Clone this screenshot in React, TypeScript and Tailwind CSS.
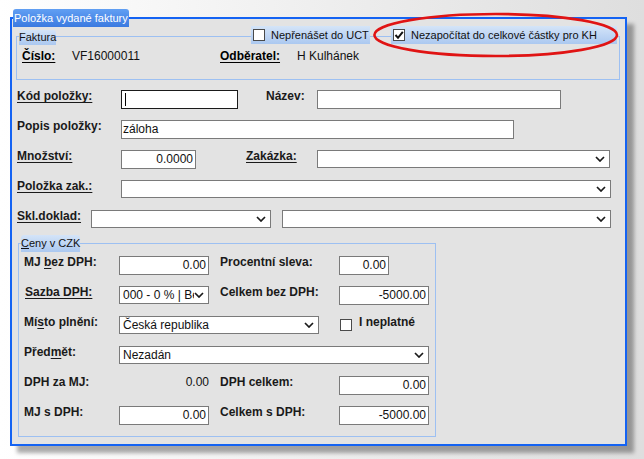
import React from 'react';

// popisky formuláře: tučné, posazené tak, aby účaří sedělo s textem v polích
const lbl = 'font-bold leading-[12px] text-[#1a1a1a] shrink-0 whitespace-nowrap';
const und = 'underline underline-offset-[2px]';

function Chevron() {
  return (
    <svg width="10" height="6" viewBox="0 0 10 6" className="shrink-0">
      <path d="M1 1L5 5L9 1" fill="none" stroke="#1a1a1a" strokeWidth="1.7" />
    </svg>
  );
}

function Select({ w, value = '' }: { w: string; value?: string }) {
  return (
    <div className={`${w} h-[18px] shrink-0 flex items-center border border-[#7a7a7a] bg-white pl-[3px] pr-[4px]`}>
      <span className="flex-1 overflow-hidden whitespace-nowrap leading-[16px] text-[#111]">{value}</span>
      <Chevron />
    </div>
  );
}

function TextBox({ w, value = '', right = false }: { w: string; value?: string; right?: boolean }) {
  return (
    <div
      className={`${w} h-[19px] shrink-0 border border-[#7a7a7a] bg-white leading-[17px] whitespace-nowrap overflow-hidden text-[#111] ${
        right ? 'text-right pr-[2px]' : 'pl-px'
      }`}
    >
      {value}
    </div>
  );
}

function Check({ checked = false }: { checked?: boolean }) {
  return (
    <div className="w-[12px] h-[12px] shrink-0 border border-[#4a4a4a] bg-white flex items-center justify-center">
      {checked && (
        <svg width="10" height="10" viewBox="0 0 10 10">
          <path d="M1.5 5L4 7.8L8.8 1.8" fill="none" stroke="#111" strokeWidth="2" />
        </svg>
      )}
    </div>
  );
}

const lightTab = 'bg-linear-to-b from-[#d4e4f8] to-[#abc8f0] whitespace-nowrap';

export default function App() {
  return (
    <div className="relative w-[644px] h-[459px] overflow-hidden bg-linear-to-r from-white to-[#dedede] pl-[10px] pt-[17px] font-['Liberation_Sans',Arial,sans-serif] text-[12px]">
      <div className="relative w-[617px] h-[429px] border-2 border-[#1463f3] bg-[#e3e3e3] shadow-[7px_7px_4px_rgba(0,0,0,0.33)] pl-[4px] pt-[17px]">
        <div className="absolute left-px -top-[10px] h-[18px] rounded-t-[3px] bg-linear-to-b from-[#619ff3] to-[#3b7ae0] px-px whitespace-nowrap text-[11px] leading-[19px] text-white">
          Položka vydané faktury
        </div>

        {/* Faktura */}
        <div className="relative w-[604px] h-[44px] border border-[#9dc0f2] pl-[5px] pt-[11px]">
          <div className={`absolute left-[2px] -top-[7px] h-[15px] rounded-t-[3px] ${lightTab} text-[11px] leading-[15px] text-[#111]`}>
            Faktura
          </div>
          <div className={`absolute left-[234px] -top-[11px] h-[18px] w-[119px] flex items-center ${lightTab} pl-[2px]`}>
            <Check />
            <span className="ml-[6px] text-[11px] leading-[18px] text-[#111]">Nepřenášet do UCT</span>
          </div>
          <div className={`absolute left-[374px] -top-[11px] h-[18px] w-[226px] flex items-center ${lightTab} pl-[2px]`}>
            <Check checked />
            <span className="ml-[6px] text-[11px] leading-[18px] text-[#111]">Nezapočítat do celkové částky pro KH</span>
          </div>
          <div className="flex leading-[16px] whitespace-nowrap">
            <span className={`w-[50px] font-bold ${und}`}>Číslo:</span>
            <span className="w-[148px] text-[#111]">VF16000011</span>
            <span className={`w-[77px] font-bold ${und}`}>Odběratel:</span>
            <span className="text-[#111]">H Kulhánek</span>
          </div>
        </div>

        {/* hlavní řádky */}
        <div className="ml-px mt-[10px]">
          <div className="flex items-start h-[30px]">
            <span className={`${lbl} ${und} w-[104px]`}>Kód položky:</span>
            <div className="relative w-[117px] h-[19px] shrink-0 border border-[#1a1a1a] bg-white">
              <div className="absolute left-[3px] top-[2px] w-px h-[13px] bg-black" />
            </div>
            <span className={`${lbl} ml-[28px] w-[51px]`}>Název:</span>
            <TextBox w="w-[244px]" />
          </div>
          <div className="flex items-start h-[30px]">
            <span className={`${lbl} w-[104px]`}>Popis položky:</span>
            <TextBox w="w-[393px]" value="záloha" />
          </div>
          <div className="flex items-start h-[30px]">
            <span className={`${lbl} ${und} w-[104px]`}>Množství:</span>
            <TextBox w="w-[75px]" value="0.0000" right />
            <span className={`${lbl} ${und} ml-[50px] w-[71px]`}>Zakázka:</span>
            <Select w="w-[293px]" />
          </div>
          <div className="flex items-start h-[30px]">
            <span className={`${lbl} ${und} w-[104px]`}>Položka zak.:</span>
            <Select w="w-[490px]" />
          </div>
          <div className="flex items-start h-[30px]">
            <span className={`${lbl} ${und} w-[74px]`}>Skl.doklad:</span>
            <Select w="w-[180px]" />
            <div className="ml-[11px]">
              <Select w="w-[329px]" />
            </div>
          </div>
        </div>

        {/* Ceny v CZK */}
        <div className="relative ml-[2px] mt-[3px] w-[418px] h-[194px] border border-[#9dc0f2] pl-[5px] pt-[12px]">
          <div className={`absolute left-[2px] -top-[9px] h-[17px] rounded-t-[3px] ${lightTab} text-[11px] leading-[17px] text-[#111]`}>
            <span className="underline">C</span>eny v CZK
          </div>
          <div className="flex items-start h-[30px]">
            <span className={`${lbl} w-[95px]`}>
              MJ <span className="underline underline-offset-[2px]">b</span>ez DPH:
            </span>
            <TextBox w="w-[90px]" value="0.00" right />
            <span className={`${lbl} ml-[11px] w-[119px]`}>Procentní sleva:</span>
            <TextBox w="w-[50px]" value="0.00" right />
          </div>
          <div className="flex items-start h-[30px]">
            <span className={`${lbl} w-[95px] pl-px`}>
              <span className={und}>Sazba DPH:</span>
            </span>
            <Select w="w-[90px]" value="000 - 0 % | Bez DPH" />
            <span className={`${lbl} ml-[11px] w-[119px]`}>Celkem bez DPH:</span>
            <TextBox w="w-[90px]" value="-5000.00" right />
          </div>
          <div className="flex items-start h-[30px]">
            <span className={`${lbl} w-[95px]`}>
              Mí<span className="underline underline-offset-[2px]">s</span>to plnění:
            </span>
            <Select w="w-[200px]" value="Česká republika" />
            <div className="ml-[21px] mt-[3px]">
              <Check />
            </div>
            <span className={`${lbl} ml-[7px]`}>I neplatné</span>
          </div>
          <div className="flex items-start h-[30px]">
            <span className={`${lbl} w-[95px]`}>
              Před<span className="underline underline-offset-[2px]">m</span>ět:
            </span>
            <Select w="w-[310px]" value="Nezadán" />
          </div>
          <div className="flex items-start h-[30px]">
            <span className={`${lbl} w-[95px]`}>DPH za MJ:</span>
            <span className="w-[90px] shrink-0 text-right leading-[12px] text-[#111]">0.00</span>
            <span className={`${lbl} ml-[11px] w-[119px]`}>DPH celkem:</span>
            <TextBox w="w-[90px]" value="0.00" right />
          </div>
          <div className="flex items-start h-[30px]">
            <span className={`${lbl} w-[95px]`}>MJ s DPH:</span>
            <TextBox w="w-[90px]" value="0.00" right />
            <span className={`${lbl} ml-[11px] w-[119px]`}>Celkem s DPH:</span>
            <TextBox w="w-[90px]" value="-5000.00" right />
          </div>
        </div>
      </div>

      {/* červené zvýraznění */}
      <svg className="absolute left-[370px] top-[10px] pointer-events-none" width="252" height="50" viewBox="0 0 252 50">
        <ellipse cx="125.7" cy="25" rx="121.3" ry="21" fill="none" stroke="#e01414" strokeWidth="2.6" />
      </svg>
    </div>
  );
}
